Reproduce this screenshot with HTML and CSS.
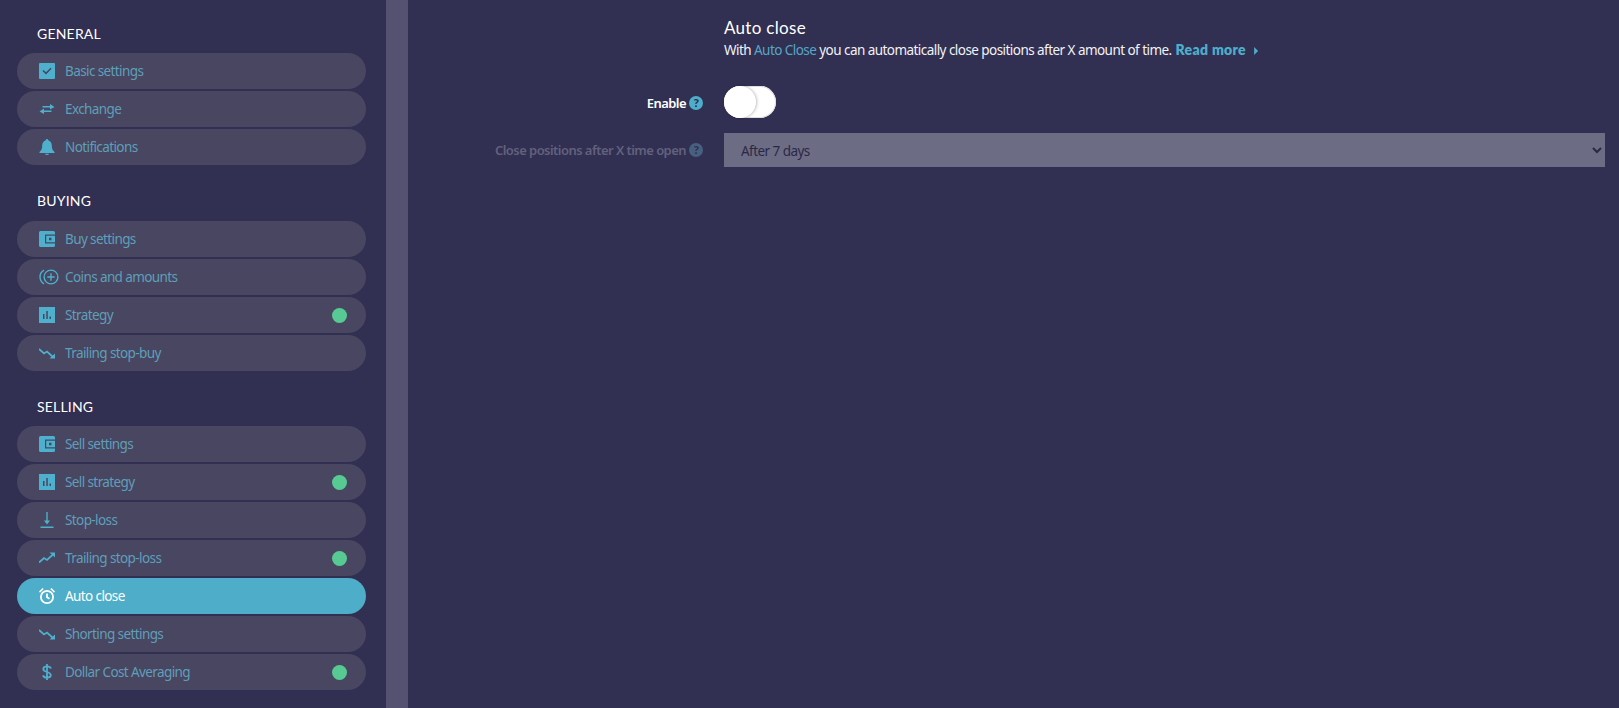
FILE: index.html
```html
<!DOCTYPE html>
<html lang="en">
<head>
<meta charset="utf-8">
<title>Auto close</title>
<link rel="stylesheet" href="styles.css">
</head>
<body>
<div class="app">
  <aside class="sidebar">
    <h3 class="group-title first">GENERAL</h3>
    <a class="pill"><svg class="ico" viewBox="0 0 16 16"><path fill="currentColor" fill-rule="evenodd" d="M1 0h14a1 1 0 0 1 1 1v14a1 1 0 0 1-1 1H1a1 1 0 0 1-1-1V1a1 1 0 0 1 1-1zm2.500 8l1.100-1.100L7 9.300l4.500-4.600 1.100 1.100L7 11.500z"/></svg><span>Basic settings</span></a>
    <a class="pill"><svg class="ico" viewBox="0 0 16 16"><path fill="currentColor" d="M3.500 5h7.500V3l4.500 3-4.500 2.500V6.600H3.500zM12.500 9.400H5V7.500L.5 10.500 5 13v-2h7.500z"/></svg><span>Exchange</span></a>
    <a class="pill"><svg class="ico" viewBox="0 0 16 16"><path fill="currentColor" d="M8 0a1.200 1.200 0 0 1 1.200 1.300C11.500 2 12.800 4 12.800 6.500c0 3.500 1 5 2.700 6.500v1H.5v-1c1.700-1.500 2.700-3 2.700-6.500C3.200 4 4.500 2 6.800 1.300A1.200 1.200 0 0 1 8 0zM6 14.700h4a2 1.300 0 0 1-4 0z"/></svg><span>Notifications</span></a>

    <h3 class="group-title raised">BUYING</h3>
    <a class="pill"><svg class="ico" viewBox="0 0 16 16"><path fill="currentColor" fill-rule="evenodd" d="M1.500 0h13A1.500 1.500 0 0 1 16 1.500v13a1.500 1.500 0 0 1-1.500 1.500h-13A1.500 1.500 0 0 1 0 14.500v-13A1.500 1.500 0 0 1 1.500 0zM6 3.500h10v9H6zM7.200 4.700H16v6.600H7.200zM10 6.800h2.500v2.500H10z"/></svg><span>Buy settings</span></a>
    <a class="pill"><svg class="ico wide" viewBox="0 0 22 16"><g fill="none" stroke="currentColor" stroke-width="1.400"><circle cx="14" cy="8" r="6.900"/><path d="M7 1.200a7.800 7.800 0 0 0 0 13.600M14 4.300v7.400M10.300 8h7.400"/></g></svg><span>Coins and amounts</span></a>
    <a class="pill"><svg class="ico" viewBox="0 0 16 16"><path fill="currentColor" fill-rule="evenodd" d="M0 0h16v16H0zM4 7v5h1.500V7zm3.300-3v8h1.500V4zm3.200 5.500V12H12V9.500z"/></svg><span>Strategy</span><i class="dot"></i></a>
    <a class="pill"><svg class="ico" viewBox="0 0 16 16"><path fill="none" stroke="currentColor" stroke-width="1.700" d="M0 4l5 4.500 3-2 6 5.500"/><path fill="currentColor" d="M10.500 13.500h5.500V8.500z"/></svg><span>Trailing stop-buy</span></a>

    <h3 class="group-title tight">SELLING</h3>
    <a class="pill"><svg class="ico" viewBox="0 0 16 16"><path fill="currentColor" fill-rule="evenodd" d="M1.500 0h13A1.500 1.500 0 0 1 16 1.500v13a1.500 1.500 0 0 1-1.500 1.500h-13A1.500 1.500 0 0 1 0 14.500v-13A1.500 1.500 0 0 1 1.500 0zM6 3.500h10v9H6zM7.200 4.700H16v6.600H7.200zM10 6.800h2.500v2.500H10z"/></svg><span>Sell settings</span></a>
    <a class="pill"><svg class="ico" viewBox="0 0 16 16"><path fill="currentColor" fill-rule="evenodd" d="M0 0h16v16H0zM4 7v5h1.500V7zm3.300-3v8h1.500V4zm3.200 5.500V12H12V9.500z"/></svg><span>Sell strategy</span><i class="dot"></i></a>
    <a class="pill"><svg class="ico" viewBox="0 0 16 16"><path fill="currentColor" d="M7.300 0h1.400v8.500H11L8 12.500 5 8.500h2.300zM1.500 14.500h13V16h-13z"/></svg><span>Stop-loss</span></a>
    <a class="pill"><svg class="ico" viewBox="0 0 16 16"><path fill="none" stroke="currentColor" stroke-width="1.700" d="M0 12.500l5-4.500 3 2 6-5.500"/><path fill="currentColor" d="M10.500 2.500h5.500v5z"/></svg><span>Trailing stop-loss</span><i class="dot"></i></a>
    <a class="pill active"><svg class="ico" viewBox="0 0 16 16"><g fill="none" stroke="currentColor" stroke-width="1.800"><circle cx="8" cy="9" r="6.100"/><path d="M8 5.500V9.300l2.500 1.500"/></g><path fill="currentColor" d="M0 3.500L3.500 0l1.200 1L1 4.800zM16 3.500L12.500 0l-1.200 1L15 4.800z"/></svg><span>Auto close</span></a>
    <a class="pill"><svg class="ico" viewBox="0 0 16 16"><path fill="none" stroke="currentColor" stroke-width="1.700" d="M0 4l5 4.500 3-2 6 5.500"/><path fill="currentColor" d="M10.500 13.500h5.500V8.500z"/></svg><span>Shorting settings</span></a>
    <a class="pill"><svg class="ico" viewBox="0 0 16 16"><path fill="none" stroke="currentColor" stroke-width="1.800" d="M12 4.500C11.500 3 10 2.300 8 2.300 5.700 2.300 4.300 3.400 4.300 5S5.700 7.300 8 8s3.800 1.500 3.800 3.100S10.300 13.700 8 13.700c-2 0-3.500-.8-4-2.300M8 0v16"/></svg><span>Dollar Cost Averaging</span><i class="dot"></i></a>
  </aside>
  <div class="track"></div>
  <main class="content">
    <div class="head">
      <h2>Auto close</h2>
      <p>With <span class="link">Auto Close</span> you can automatically close positions after X amount of time. <a class="more">Read more<svg class="caret" viewBox="0 0 6 10"><path fill="currentColor" d="M0 0l5 5-5 5z"/></svg></a></p>
    </div>
    <div class="row enable">
      <label class="lbl">Enable<svg class="help" viewBox="0 0 14 14"><circle cx="7" cy="7" r="7" fill="currentColor"/><text x="7" y="11" class="q">?</text></svg></label>
      <div class="switch"><div class="knob"></div></div>
    </div>
    <div class="row disabled">
      <label class="lbl">Close positions after X time open<svg class="help" viewBox="0 0 14 14"><circle cx="7" cy="7" r="7" fill="currentColor"/><text x="7" y="11" class="q">?</text></svg></label>
      <select class="sel" disabled><option>After 7 days</option></select>
    </div>
  </main>
</div>
</body>
</html>
```
FILE: styles.css
```css
* { box-sizing: border-box; }
html, body { margin: 0; height: 100%; }
body {
  background: #312f52;
  color: #fff;
  font-family: "Noto Sans", sans-serif;
  font-size: 13px;
  overflow: hidden;
}
.app { display: flex; height: 708px; }
.sidebar { width: 386px; flex: none; padding: 0 20px 0 17px; }
.group-title {
  margin: 26px 0 0;
  height: 22px;
  padding-left: 20px;
  font: 400 14px/22px "Lato", sans-serif;
  letter-spacing: .2px;
  color: #fff;
}
.group-title.first { margin-top: 23px; }
.group-title.tight { margin-top: 25px; }
.group-title.raised { margin-top: 25px; height: 23px; }
.group-title + .pill { margin-top: 8px; }
.pill {
  display: flex;
  align-items: center;
  height: 36px;
  margin-top: 2px;
  padding: 0 19px 0 22px;
  border-radius: 18px;
  background: #484660;
  color: #5f9fb9;
  font-size: 13.5px;
  letter-spacing: -.6px;
}
.pill .ico { width: 16px; height: 16px; flex: none; margin-right: 10px; color: #4eb0cc; }
.pill .ico.wide { width: 22px; margin-left: -2px; margin-right: 6px; }
.pill span { flex: 1; }
.pill.active { background: #4eadc8; color: #fff; }
.pill.active .ico { color: #fff; }
.dot { width: 15px; height: 15px; border-radius: 50%; background: #57ca93; flex: none; }
.track { width: 22px; flex: none; background: #545270; }
.content { flex: 1; padding: 0 14px 0 316px; }
.head h2 { margin: 17px 0 0; font: 400 17px/22px "Lato", sans-serif; letter-spacing: .3px; }
.head p { margin: 2px 0 0; font-size: 13.5px; line-height: 18px; letter-spacing: -.55px; color: #f2f2f5; }
.link { color: #55a7c4; }
.more { color: #4eadc8; font: 800 14px "Lato", sans-serif; letter-spacing: .3px; margin-left: 1px; }
.caret { width: 5px; height: 8px; margin-left: 8px; }
.row { display: flex; align-items: center; }
.row .lbl {
  width: 295px;
  margin-left: -316px;
  margin-right: 21px;
  flex: none;
  display: flex;
  justify-content: flex-end;
  align-items: center;
  font-size: 13px;
  font-weight: 600;
  letter-spacing: -.55px;
  transform: translateY(1px);
}
.help { width: 14px; height: 14px; margin-left: 3px; color: #4eadc8; }
.q { font: 900 12px "Lato", sans-serif; fill: #312f52; text-anchor: middle; }
.row.enable { margin-top: 27px; }
.switch {
  width: 52px; height: 32px; border-radius: 16px; background: #fff;
  box-shadow: inset 0 0 0 1px #dfdfdf;
}
.knob { width: 32px; height: 32px; border-radius: 50%; background: #fff; box-shadow: 1px 0 3px rgba(0,0,0,.25); }
.row.disabled { margin-top: 15px; }
.row.disabled .lbl { color: #62617c; transform: translateY(0); }
.row.disabled .help { color: #47607f; }
.sel {
  flex: 1;
  height: 34px;
  border: 0;
  padding: 2px 13px 0;
  border-radius: 0;
  background-color: #6d6c85;
  color: #2a2945;
  opacity: 1;
  font: 13.5px "Noto Sans", sans-serif;
  letter-spacing: -.55px;
}
```
